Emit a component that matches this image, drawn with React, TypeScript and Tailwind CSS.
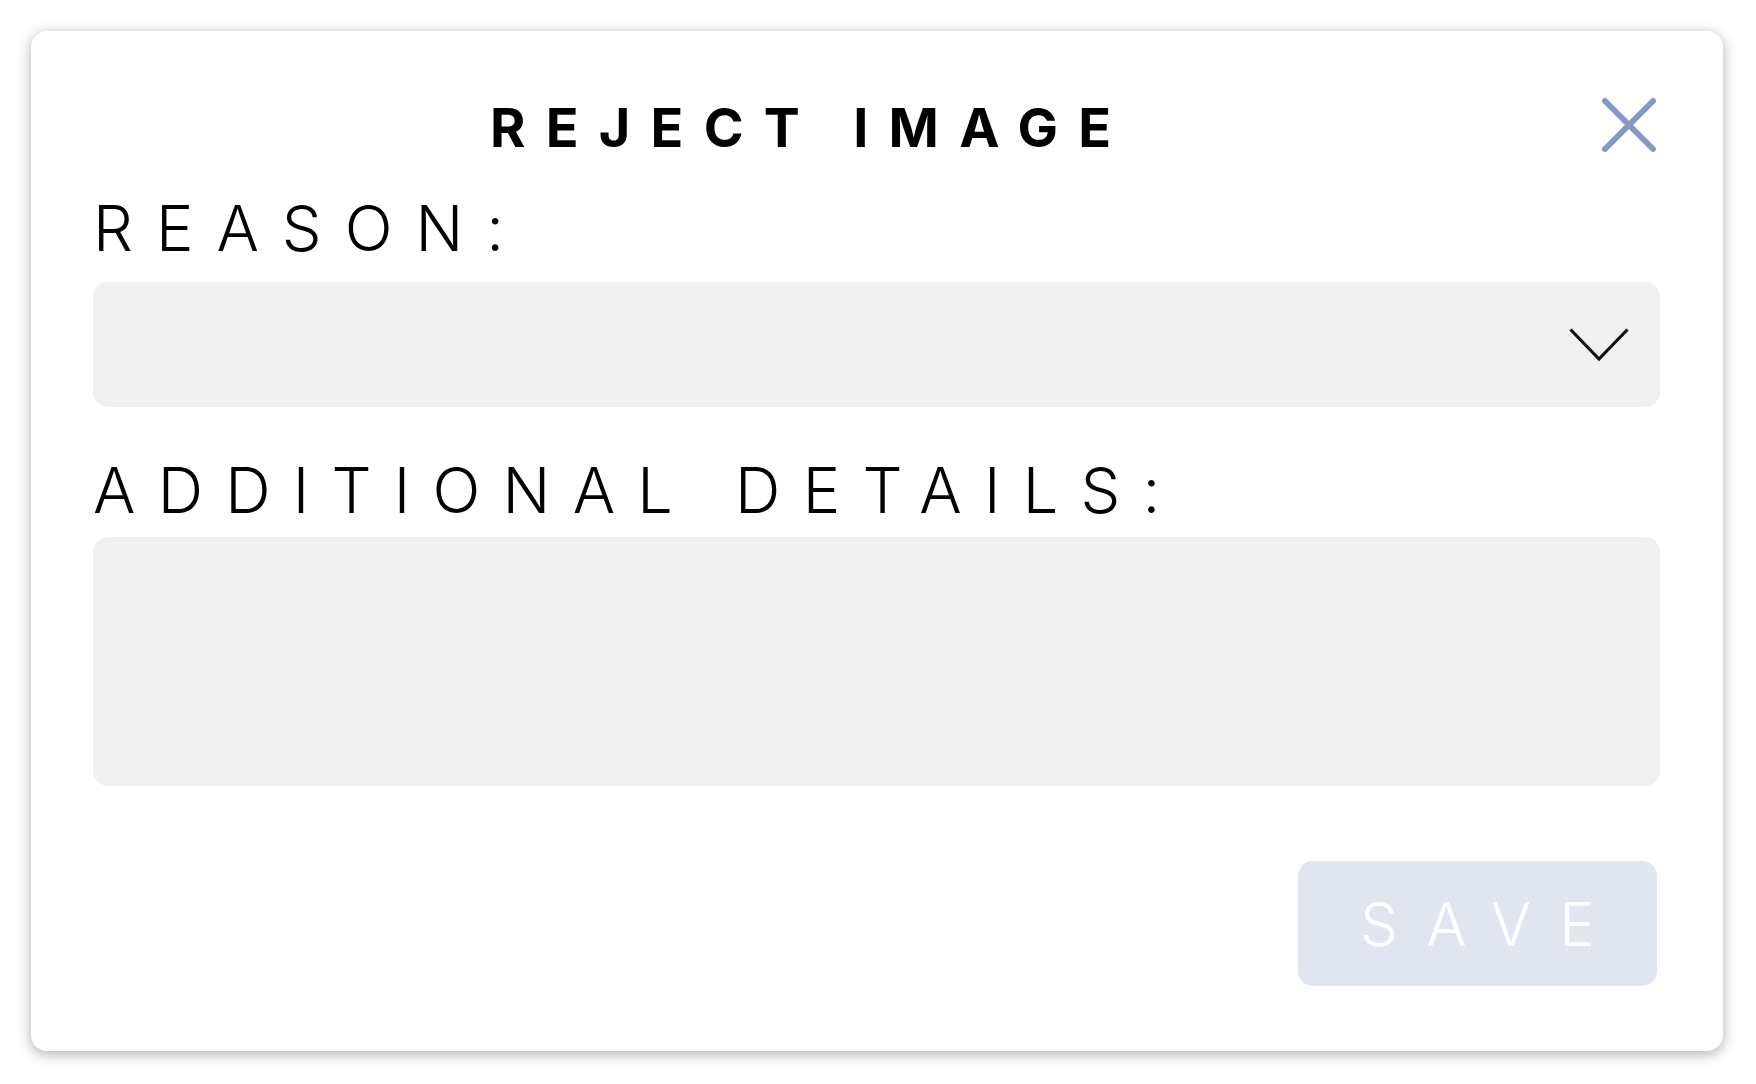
import React from 'react';

const ChevronDown = () => (
  <svg width="60" height="34" viewBox="0 0 60 34" fill="none">
    <polyline points="1.5,1.5 30,31 58.5,1.5" stroke="#111" strokeWidth="3.2" />
  </svg>
);

const CloseIcon = () => (
  <svg width="56" height="56" viewBox="0 0 56 56" fill="none">
    <line x1="4" y1="4" x2="52" y2="52" stroke="#8599c5" strokeWidth="6" strokeLinecap="round" />
    <line x1="52" y1="4" x2="4" y2="52" stroke="#8599c5" strokeWidth="6" strokeLinecap="round" />
  </svg>
);

const App: React.FC = () => {
  return (
    <div className="min-h-screen bg-white p-[31px] font-['Inter',sans-serif]">
      <div className="w-[1692px] h-[1020px] bg-white rounded-2xl shadow-[0_3px_14px_rgba(0,0,0,0.32)] pt-[66px] pb-[65px] pl-[62px] pr-[63px] flex flex-col">
        {/* header */}
        <div className="flex items-center h-[56px]">
          <h1 className="ml-[397px] mt-[6px] text-[54px] leading-none font-bold tracking-[0.375em] text-black">
            REJECT IMAGE
          </h1>
          <button className="ml-auto mr-[3px]" title="Close">
            <CloseIcon />
          </button>
        </div>

        <label className="mt-[44px] text-[63px] leading-none font-[350] tracking-[0.365em] text-black">
          REASON:
        </label>
        <div className="mt-[22px] h-[125px] bg-[#f0f0f0] rounded-[15px] flex items-center justify-end pr-[31px]">
          <ChevronDown />
        </div>

        <label className="mt-[52px] text-[63px] leading-none font-[350] tracking-[0.353em] text-black">
          ADDITIONAL DETAILS:
        </label>
        <div className="mt-[15px] h-[249px] bg-[#f0f0f0] rounded-[15px]" />

        <div className="mt-[75px] flex justify-end">
          <button className="mr-[3px] w-[359px] h-[125px] bg-[#e1e5f0] rounded-[15px] text-white text-[60px] font-[350] leading-none tracking-[0.47em] pl-[0.47em]">
            SAVE
          </button>
        </div>
      </div>
    </div>
  );
};

export default App;
